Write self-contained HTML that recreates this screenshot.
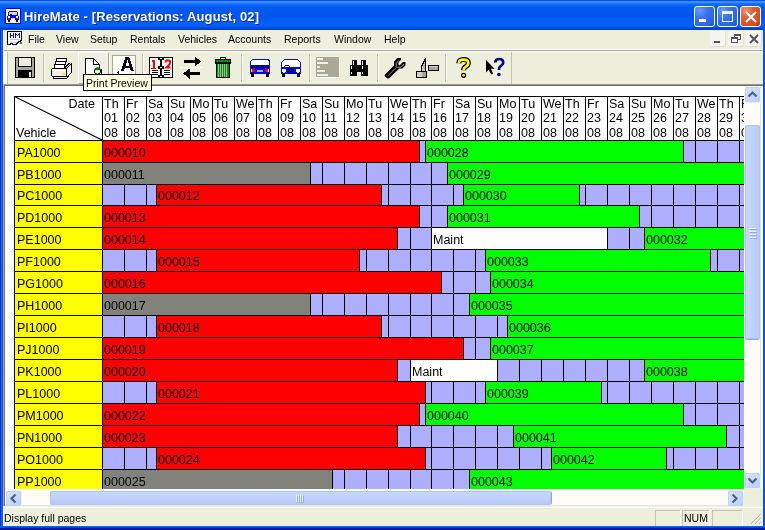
<!DOCTYPE html>
<html><head><meta charset="utf-8">
<style>
*{margin:0;padding:0;box-sizing:border-box}
html,body{width:765px;height:530px;overflow:hidden;background:#0055e5;font-family:"Liberation Sans", sans-serif}
.abs{position:absolute}
#client{position:absolute;left:4px;top:85px;width:759px;height:421px;background:#fff;overflow:hidden;border-left:1px solid #716f64;border-top:1px solid #716f64}
#gridwrap{position:absolute;left:0;top:0;width:744px;height:489px;overflow:hidden}
.t{position:absolute;font-size:12.5px;line-height:14px;color:#000;white-space:nowrap}
.hc{position:absolute;top:97px;height:43px;background:#fff}
.yc{position:absolute;left:15px;width:87px;height:21px;background:#ffff00}
.lc{position:absolute;height:21px;background:#aeaeff}
.bar{position:absolute;height:21px;overflow:hidden;border-left:1px solid #000;border-right:1px solid #000}
.bar span{position:absolute;left:1px;top:5px;font-size:12.5px;line-height:14px;white-space:nowrap;color:#000}
.menu{position:absolute;top:33px;font-size:10.5px;line-height:13px;color:#000;white-space:nowrap}
</style></head><body>
<div id="root" style="position:absolute;left:0;top:0;width:765px;height:530px;will-change:transform">
<div class="abs" style="left:0;top:0;width:765px;height:530px;background:#0855dd"></div>
<div class="abs" style="left:0;top:0;width:1px;height:530px;background:#0030c8"></div>
<div class="abs" style="left:1px;top:30px;width:1px;height:500px;background:#1a6cff"></div>
<div class="abs" style="left:2px;top:30px;width:1px;height:500px;background:#0850e8"></div>
<div class="abs" style="left:0;top:526px;width:765px;height:4px;background:linear-gradient(#1060ff 0,#1060ff 1px,#0048e0 1px,#0048e0 2px,#0020b0 2px,#0020b0 3px,#001090 3px)"></div>
<div class="abs" style="left:0;top:0;width:765px;height:30px;background:linear-gradient(#0a50e8 0px,#0a50e8 1px,#3a8cff 1px,#3a8cff 3px,#2078ff 3px,#0a68fa 5px,#005af0 7px,#0056ee 16px,#005cf4 21px,#0062fa 25px,#0058ee 27px,#0048dc 28px,#003cc8 30px)"></div>
<svg class="abs" style="left:0;top:0" width="24" height="26" shape-rendering="crispEdges"><rect x="5" y="8" width="16" height="16" fill="#0000e8"/><rect x="6" y="9" width="14" height="14" fill="#fff"/><rect x="9" y="11" width="8" height="1" fill="#0000f0"/><rect x="8" y="12" width="1" height="4" fill="#0000f0"/><rect x="17" y="12" width="1" height="4" fill="#0000f0"/><rect x="9" y="12" width="8" height="3" fill="#d8d8c8"/><rect x="10" y="14" width="2" height="1" fill="#000"/><rect x="9" y="15" width="8" height="1" fill="#0000f0"/><rect x="7" y="16" width="12" height="4" fill="#0000f0"/><rect x="8" y="16" width="2" height="2" fill="#fff"/><rect x="16" y="16" width="2" height="2" fill="#fff"/><rect x="8" y="18" width="1" height="1" fill="#f00"/><rect x="17" y="18" width="1" height="1" fill="#f00"/><rect x="11" y="18" width="4" height="2" fill="#e8e8c8"/><rect x="8" y="20" width="2" height="2" fill="#000"/><rect x="16" y="20" width="2" height="2" fill="#000"/></svg>
<div class="abs" style="left:24px;top:8px;font-size:13px;font-weight:bold;color:#fff;line-height:18px;white-space:nowrap;letter-spacing:0.12px;text-shadow:1px 1px 0 #0a2c9a">HireMate - [Reservations: August, 02]</div>
<div style="position:absolute;top:6px;width:21px;height:21px;border:1px solid #fff;border-radius:3px;left:694px;background:radial-gradient(circle at 25% 20%,#6a9cff 0,#3a75f0 35%,#2a60e0 80%,#2050c8 100%)"><div class="abs" style="left:4px;top:12px;width:7px;height:3px;background:#fff"></div></div>
<div style="position:absolute;top:6px;width:21px;height:21px;border:1px solid #fff;border-radius:3px;left:717px;background:radial-gradient(circle at 25% 20%,#6a9cff 0,#3a75f0 35%,#2a60e0 80%,#2050c8 100%)"><div class="abs" style="left:4px;top:4px;width:11px;height:11px;border:1px solid #fff;border-top-width:3px"></div></div>
<div style="position:absolute;top:6px;width:21px;height:21px;border:1px solid #fff;border-radius:3px;left:740px;background:radial-gradient(circle at 25% 20%,#f0906a 0,#e06038 35%,#d04a20 80%,#b83810 100%)"><svg class="abs" style="left:4px;top:4px" width="12" height="12"><path d="M1 1 L11 11 M11 1 L1 11" stroke="#fff" stroke-width="2"/></svg></div>
<div class="abs" style="left:3px;top:30px;width:760px;height:55px;background:#edeedc"></div>
<div class="abs" style="left:3px;top:30px;width:1px;height:55px;background:#f8f4e8"></div>
<div class="abs" style="left:3px;top:84px;width:1px;height:422px;background:#aca899"></div>
<div class="abs" style="left:3px;top:506px;width:1px;height:20px;background:#fffbf0"></div>
<div class="abs" style="left:4px;top:49px;width:759px;height:1px;background:#fff"></div>
<div class="abs" style="left:4px;top:50px;width:759px;height:1px;background:#aca899"></div>
<div class="abs" style="left:4px;top:51px;width:759px;height:1px;background:#fff"></div>
<svg class="abs" style="left:0;top:0" width="30" height="50" shape-rendering="crispEdges"><rect x="7" y="31" width="16" height="17" fill="#fff"/><path d="M7.5 31.5 H21.5 V40.5 H20.5 V41.5 H18.5 V42.5 H17.5 V43.5 H16.5 V44.5 H12.5 V43.5 H10.5 V44.5 H7.5 Z" fill="#fff" stroke="#000"/><rect x="10" y="33" width="1" height="5" fill="#0000ff"/><rect x="13" y="33" width="1" height="5" fill="#0000ff"/><rect x="11" y="35" width="2" height="1" fill="#0000ff"/><rect x="15" y="33" width="1" height="5" fill="#0000ff"/><rect x="19" y="33" width="1" height="5" fill="#0000ff"/><rect x="16" y="34" width="1" height="1" fill="#0000ff"/><rect x="17" y="35" width="1" height="1" fill="#0000ff"/><rect x="18" y="34" width="1" height="1" fill="#0000ff"/><rect x="10" y="39" width="10" height="1" fill="#c8c8dc"/><rect x="10" y="42" width="7" height="1" fill="#c8c8dc"/><rect x="20" y="42" width="2" height="2" fill="#00a000"/></svg>
<div class="menu" style="left:28px">File</div>
<div class="menu" style="left:56px">View</div>
<div class="menu" style="left:90px">Setup</div>
<div class="menu" style="left:130px">Rentals</div>
<div class="menu" style="left:178px">Vehicles</div>
<div class="menu" style="left:228px">Accounts</div>
<div class="menu" style="left:284px">Reports</div>
<div class="menu" style="left:334px">Window</div>
<div class="menu" style="left:384px">Help</div>
<div style="position:absolute;top:31px;width:16px;height:16px;background:#f6f4ee;border-radius:2px;box-shadow:inset -1px -1px 0 #e2dfd4;left:710px"><div class="abs" style="left:4px;top:10px;width:6px;height:2px;background:#555"></div></div>
<div style="position:absolute;top:31px;width:16px;height:16px;background:#f6f4ee;border-radius:2px;box-shadow:inset -1px -1px 0 #e2dfd4;left:728px"><div class="abs" style="left:6px;top:3px;width:7px;height:6px;border:1px solid #555;border-top-width:2px"></div><div class="abs" style="left:3px;top:6px;width:7px;height:6px;border:1px solid #555;border-top-width:2px;background:#f6f4ee"></div></div>
<div style="position:absolute;top:31px;width:16px;height:16px;background:#f6f4ee;border-radius:2px;box-shadow:inset -1px -1px 0 #e2dfd4;left:746px"><svg class="abs" style="left:3px;top:3px" width="10" height="10"><path d="M1 1 L9 9 M9 1 L1 9" stroke="#555" stroke-width="2"/></svg></div>
<div class="abs" style="left:4px;top:84px;width:759px;height:1px;background:#9d9a8c"></div>
<div class="abs" style="left:4px;top:52px;width:3px;height:32px;background:#fff"></div>
<div class="abs" style="left:7px;top:52px;width:1px;height:32px;background:#c5c2b2"></div>
<!-- client -->
<div id="client"></div>
<div id="gridwrap">
<div style="position:absolute;left:14px;top:96px;width:731px;height:393px;background:#000"></div>
<div style="position:absolute;left:15px;top:97px;width:87px;height:43px;background:#fff"></div>
<svg style="position:absolute;left:14px;top:96px" width="89" height="45"><line x1="0.5" y1="0.5" x2="88" y2="44" stroke="#000" stroke-width="1.1"/></svg>
<div class="t" style="left:15px;top:97px;width:80px;text-align:right">Date</div>
<div class="t" style="left:16px;top:126px">Vehicle</div>
<div class="hc" style="left:103px;width:21px"></div>
<div class="t" style="left:104px;top:97px">Th</div>
<div class="t" style="left:104px;top:111px">01</div>
<div class="t" style="left:104px;top:126px">08</div>
<div class="hc" style="left:125px;width:21px"></div>
<div class="t" style="left:126px;top:97px">Fr</div>
<div class="t" style="left:126px;top:111px">02</div>
<div class="t" style="left:126px;top:126px">08</div>
<div class="hc" style="left:147px;width:21px"></div>
<div class="t" style="left:148px;top:97px">Sa</div>
<div class="t" style="left:148px;top:111px">03</div>
<div class="t" style="left:148px;top:126px">08</div>
<div class="hc" style="left:169px;width:21px"></div>
<div class="t" style="left:170px;top:97px">Su</div>
<div class="t" style="left:170px;top:111px">04</div>
<div class="t" style="left:170px;top:126px">08</div>
<div class="hc" style="left:191px;width:21px"></div>
<div class="t" style="left:192px;top:97px">Mo</div>
<div class="t" style="left:192px;top:111px">05</div>
<div class="t" style="left:192px;top:126px">08</div>
<div class="hc" style="left:213px;width:21px"></div>
<div class="t" style="left:214px;top:97px">Tu</div>
<div class="t" style="left:214px;top:111px">06</div>
<div class="t" style="left:214px;top:126px">08</div>
<div class="hc" style="left:235px;width:21px"></div>
<div class="t" style="left:236px;top:97px">We</div>
<div class="t" style="left:236px;top:111px">07</div>
<div class="t" style="left:236px;top:126px">08</div>
<div class="hc" style="left:257px;width:21px"></div>
<div class="t" style="left:258px;top:97px">Th</div>
<div class="t" style="left:258px;top:111px">08</div>
<div class="t" style="left:258px;top:126px">08</div>
<div class="hc" style="left:279px;width:21px"></div>
<div class="t" style="left:280px;top:97px">Fr</div>
<div class="t" style="left:280px;top:111px">09</div>
<div class="t" style="left:280px;top:126px">08</div>
<div class="hc" style="left:301px;width:21px"></div>
<div class="t" style="left:302px;top:97px">Sa</div>
<div class="t" style="left:302px;top:111px">10</div>
<div class="t" style="left:302px;top:126px">08</div>
<div class="hc" style="left:323px;width:21px"></div>
<div class="t" style="left:324px;top:97px">Su</div>
<div class="t" style="left:324px;top:111px">11</div>
<div class="t" style="left:324px;top:126px">08</div>
<div class="hc" style="left:345px;width:21px"></div>
<div class="t" style="left:346px;top:97px">Mo</div>
<div class="t" style="left:346px;top:111px">12</div>
<div class="t" style="left:346px;top:126px">08</div>
<div class="hc" style="left:367px;width:21px"></div>
<div class="t" style="left:368px;top:97px">Tu</div>
<div class="t" style="left:368px;top:111px">13</div>
<div class="t" style="left:368px;top:126px">08</div>
<div class="hc" style="left:389px;width:21px"></div>
<div class="t" style="left:390px;top:97px">We</div>
<div class="t" style="left:390px;top:111px">14</div>
<div class="t" style="left:390px;top:126px">08</div>
<div class="hc" style="left:411px;width:20px"></div>
<div class="t" style="left:412px;top:97px">Th</div>
<div class="t" style="left:412px;top:111px">15</div>
<div class="t" style="left:412px;top:126px">08</div>
<div class="hc" style="left:432px;width:21px"></div>
<div class="t" style="left:433px;top:97px">Fr</div>
<div class="t" style="left:433px;top:111px">16</div>
<div class="t" style="left:433px;top:126px">08</div>
<div class="hc" style="left:454px;width:21px"></div>
<div class="t" style="left:455px;top:97px">Sa</div>
<div class="t" style="left:455px;top:111px">17</div>
<div class="t" style="left:455px;top:126px">08</div>
<div class="hc" style="left:476px;width:21px"></div>
<div class="t" style="left:477px;top:97px">Su</div>
<div class="t" style="left:477px;top:111px">18</div>
<div class="t" style="left:477px;top:126px">08</div>
<div class="hc" style="left:498px;width:21px"></div>
<div class="t" style="left:499px;top:97px">Mo</div>
<div class="t" style="left:499px;top:111px">19</div>
<div class="t" style="left:499px;top:126px">08</div>
<div class="hc" style="left:520px;width:21px"></div>
<div class="t" style="left:521px;top:97px">Tu</div>
<div class="t" style="left:521px;top:111px">20</div>
<div class="t" style="left:521px;top:126px">08</div>
<div class="hc" style="left:542px;width:21px"></div>
<div class="t" style="left:543px;top:97px">We</div>
<div class="t" style="left:543px;top:111px">21</div>
<div class="t" style="left:543px;top:126px">08</div>
<div class="hc" style="left:564px;width:21px"></div>
<div class="t" style="left:565px;top:97px">Th</div>
<div class="t" style="left:565px;top:111px">22</div>
<div class="t" style="left:565px;top:126px">08</div>
<div class="hc" style="left:586px;width:21px"></div>
<div class="t" style="left:587px;top:97px">Fr</div>
<div class="t" style="left:587px;top:111px">23</div>
<div class="t" style="left:587px;top:126px">08</div>
<div class="hc" style="left:608px;width:21px"></div>
<div class="t" style="left:609px;top:97px">Sa</div>
<div class="t" style="left:609px;top:111px">24</div>
<div class="t" style="left:609px;top:126px">08</div>
<div class="hc" style="left:630px;width:21px"></div>
<div class="t" style="left:631px;top:97px">Su</div>
<div class="t" style="left:631px;top:111px">25</div>
<div class="t" style="left:631px;top:126px">08</div>
<div class="hc" style="left:652px;width:21px"></div>
<div class="t" style="left:653px;top:97px">Mo</div>
<div class="t" style="left:653px;top:111px">26</div>
<div class="t" style="left:653px;top:126px">08</div>
<div class="hc" style="left:674px;width:21px"></div>
<div class="t" style="left:675px;top:97px">Tu</div>
<div class="t" style="left:675px;top:111px">27</div>
<div class="t" style="left:675px;top:126px">08</div>
<div class="hc" style="left:696px;width:21px"></div>
<div class="t" style="left:697px;top:97px">We</div>
<div class="t" style="left:697px;top:111px">28</div>
<div class="t" style="left:697px;top:126px">08</div>
<div class="hc" style="left:718px;width:21px"></div>
<div class="t" style="left:719px;top:97px">Th</div>
<div class="t" style="left:719px;top:111px">29</div>
<div class="t" style="left:719px;top:126px">08</div>
<div class="hc" style="left:740px;width:21px"></div>
<div class="t" style="left:741px;top:97px">Fr</div>
<div class="t" style="left:741px;top:111px">30</div>
<div class="t" style="left:741px;top:126px">08</div>
<div class="yc" style="top:141px;height:21px"></div>
<div class="t" style="left:17px;top:146px">PA1000</div>
<div class="lc" style="left:103px;top:141px;width:21px;height:21px"></div>
<div class="lc" style="left:125px;top:141px;width:21px;height:21px"></div>
<div class="lc" style="left:147px;top:141px;width:21px;height:21px"></div>
<div class="lc" style="left:169px;top:141px;width:21px;height:21px"></div>
<div class="lc" style="left:191px;top:141px;width:21px;height:21px"></div>
<div class="lc" style="left:213px;top:141px;width:21px;height:21px"></div>
<div class="lc" style="left:235px;top:141px;width:21px;height:21px"></div>
<div class="lc" style="left:257px;top:141px;width:21px;height:21px"></div>
<div class="lc" style="left:279px;top:141px;width:21px;height:21px"></div>
<div class="lc" style="left:301px;top:141px;width:21px;height:21px"></div>
<div class="lc" style="left:323px;top:141px;width:21px;height:21px"></div>
<div class="lc" style="left:345px;top:141px;width:21px;height:21px"></div>
<div class="lc" style="left:367px;top:141px;width:21px;height:21px"></div>
<div class="lc" style="left:389px;top:141px;width:21px;height:21px"></div>
<div class="lc" style="left:411px;top:141px;width:20px;height:21px"></div>
<div class="lc" style="left:432px;top:141px;width:21px;height:21px"></div>
<div class="lc" style="left:454px;top:141px;width:21px;height:21px"></div>
<div class="lc" style="left:476px;top:141px;width:21px;height:21px"></div>
<div class="lc" style="left:498px;top:141px;width:21px;height:21px"></div>
<div class="lc" style="left:520px;top:141px;width:21px;height:21px"></div>
<div class="lc" style="left:542px;top:141px;width:21px;height:21px"></div>
<div class="lc" style="left:564px;top:141px;width:21px;height:21px"></div>
<div class="lc" style="left:586px;top:141px;width:21px;height:21px"></div>
<div class="lc" style="left:608px;top:141px;width:21px;height:21px"></div>
<div class="lc" style="left:630px;top:141px;width:21px;height:21px"></div>
<div class="lc" style="left:652px;top:141px;width:21px;height:21px"></div>
<div class="lc" style="left:674px;top:141px;width:21px;height:21px"></div>
<div class="lc" style="left:696px;top:141px;width:21px;height:21px"></div>
<div class="lc" style="left:718px;top:141px;width:21px;height:21px"></div>
<div class="lc" style="left:740px;top:141px;width:21px;height:21px"></div>
<div class="bar" style="left:102px;top:141px;width:318px;height:21px;background:#ff0000"><span style="top:5px">000010</span></div>
<div class="bar" style="left:425px;top:141px;width:259px;height:21px;background:#00ff00"><span style="top:5px">000028</span></div>
<div class="yc" style="top:163px;height:21px"></div>
<div class="t" style="left:17px;top:168px">PB1000</div>
<div class="lc" style="left:103px;top:163px;width:21px;height:21px"></div>
<div class="lc" style="left:125px;top:163px;width:21px;height:21px"></div>
<div class="lc" style="left:147px;top:163px;width:21px;height:21px"></div>
<div class="lc" style="left:169px;top:163px;width:21px;height:21px"></div>
<div class="lc" style="left:191px;top:163px;width:21px;height:21px"></div>
<div class="lc" style="left:213px;top:163px;width:21px;height:21px"></div>
<div class="lc" style="left:235px;top:163px;width:21px;height:21px"></div>
<div class="lc" style="left:257px;top:163px;width:21px;height:21px"></div>
<div class="lc" style="left:279px;top:163px;width:21px;height:21px"></div>
<div class="lc" style="left:301px;top:163px;width:21px;height:21px"></div>
<div class="lc" style="left:323px;top:163px;width:21px;height:21px"></div>
<div class="lc" style="left:345px;top:163px;width:21px;height:21px"></div>
<div class="lc" style="left:367px;top:163px;width:21px;height:21px"></div>
<div class="lc" style="left:389px;top:163px;width:21px;height:21px"></div>
<div class="lc" style="left:411px;top:163px;width:20px;height:21px"></div>
<div class="lc" style="left:432px;top:163px;width:21px;height:21px"></div>
<div class="lc" style="left:454px;top:163px;width:21px;height:21px"></div>
<div class="lc" style="left:476px;top:163px;width:21px;height:21px"></div>
<div class="lc" style="left:498px;top:163px;width:21px;height:21px"></div>
<div class="lc" style="left:520px;top:163px;width:21px;height:21px"></div>
<div class="lc" style="left:542px;top:163px;width:21px;height:21px"></div>
<div class="lc" style="left:564px;top:163px;width:21px;height:21px"></div>
<div class="lc" style="left:586px;top:163px;width:21px;height:21px"></div>
<div class="lc" style="left:608px;top:163px;width:21px;height:21px"></div>
<div class="lc" style="left:630px;top:163px;width:21px;height:21px"></div>
<div class="lc" style="left:652px;top:163px;width:21px;height:21px"></div>
<div class="lc" style="left:674px;top:163px;width:21px;height:21px"></div>
<div class="lc" style="left:696px;top:163px;width:21px;height:21px"></div>
<div class="lc" style="left:718px;top:163px;width:21px;height:21px"></div>
<div class="lc" style="left:740px;top:163px;width:21px;height:21px"></div>
<div class="bar" style="left:102px;top:163px;width:209px;height:21px;background:#82827c"><span style="top:5px">000011</span></div>
<div class="bar" style="left:447px;top:163px;width:299px;height:21px;background:#00ff00"><span style="top:5px">000029</span></div>
<div class="yc" style="top:185px;height:20px"></div>
<div class="t" style="left:17px;top:189px">PC1000</div>
<div class="lc" style="left:103px;top:185px;width:21px;height:20px"></div>
<div class="lc" style="left:125px;top:185px;width:21px;height:20px"></div>
<div class="lc" style="left:147px;top:185px;width:21px;height:20px"></div>
<div class="lc" style="left:169px;top:185px;width:21px;height:20px"></div>
<div class="lc" style="left:191px;top:185px;width:21px;height:20px"></div>
<div class="lc" style="left:213px;top:185px;width:21px;height:20px"></div>
<div class="lc" style="left:235px;top:185px;width:21px;height:20px"></div>
<div class="lc" style="left:257px;top:185px;width:21px;height:20px"></div>
<div class="lc" style="left:279px;top:185px;width:21px;height:20px"></div>
<div class="lc" style="left:301px;top:185px;width:21px;height:20px"></div>
<div class="lc" style="left:323px;top:185px;width:21px;height:20px"></div>
<div class="lc" style="left:345px;top:185px;width:21px;height:20px"></div>
<div class="lc" style="left:367px;top:185px;width:21px;height:20px"></div>
<div class="lc" style="left:389px;top:185px;width:21px;height:20px"></div>
<div class="lc" style="left:411px;top:185px;width:20px;height:20px"></div>
<div class="lc" style="left:432px;top:185px;width:21px;height:20px"></div>
<div class="lc" style="left:454px;top:185px;width:21px;height:20px"></div>
<div class="lc" style="left:476px;top:185px;width:21px;height:20px"></div>
<div class="lc" style="left:498px;top:185px;width:21px;height:20px"></div>
<div class="lc" style="left:520px;top:185px;width:21px;height:20px"></div>
<div class="lc" style="left:542px;top:185px;width:21px;height:20px"></div>
<div class="lc" style="left:564px;top:185px;width:21px;height:20px"></div>
<div class="lc" style="left:586px;top:185px;width:21px;height:20px"></div>
<div class="lc" style="left:608px;top:185px;width:21px;height:20px"></div>
<div class="lc" style="left:630px;top:185px;width:21px;height:20px"></div>
<div class="lc" style="left:652px;top:185px;width:21px;height:20px"></div>
<div class="lc" style="left:674px;top:185px;width:21px;height:20px"></div>
<div class="lc" style="left:696px;top:185px;width:21px;height:20px"></div>
<div class="lc" style="left:718px;top:185px;width:21px;height:20px"></div>
<div class="lc" style="left:740px;top:185px;width:21px;height:20px"></div>
<div class="bar" style="left:156px;top:185px;width:226px;height:20px;background:#ff0000"><span style="top:4px">000012</span></div>
<div class="bar" style="left:463px;top:185px;width:117px;height:20px;background:#00ff00"><span style="top:4px">000030</span></div>
<div class="yc" style="top:206px;height:21px"></div>
<div class="t" style="left:17px;top:211px">PD1000</div>
<div class="lc" style="left:103px;top:206px;width:21px;height:21px"></div>
<div class="lc" style="left:125px;top:206px;width:21px;height:21px"></div>
<div class="lc" style="left:147px;top:206px;width:21px;height:21px"></div>
<div class="lc" style="left:169px;top:206px;width:21px;height:21px"></div>
<div class="lc" style="left:191px;top:206px;width:21px;height:21px"></div>
<div class="lc" style="left:213px;top:206px;width:21px;height:21px"></div>
<div class="lc" style="left:235px;top:206px;width:21px;height:21px"></div>
<div class="lc" style="left:257px;top:206px;width:21px;height:21px"></div>
<div class="lc" style="left:279px;top:206px;width:21px;height:21px"></div>
<div class="lc" style="left:301px;top:206px;width:21px;height:21px"></div>
<div class="lc" style="left:323px;top:206px;width:21px;height:21px"></div>
<div class="lc" style="left:345px;top:206px;width:21px;height:21px"></div>
<div class="lc" style="left:367px;top:206px;width:21px;height:21px"></div>
<div class="lc" style="left:389px;top:206px;width:21px;height:21px"></div>
<div class="lc" style="left:411px;top:206px;width:20px;height:21px"></div>
<div class="lc" style="left:432px;top:206px;width:21px;height:21px"></div>
<div class="lc" style="left:454px;top:206px;width:21px;height:21px"></div>
<div class="lc" style="left:476px;top:206px;width:21px;height:21px"></div>
<div class="lc" style="left:498px;top:206px;width:21px;height:21px"></div>
<div class="lc" style="left:520px;top:206px;width:21px;height:21px"></div>
<div class="lc" style="left:542px;top:206px;width:21px;height:21px"></div>
<div class="lc" style="left:564px;top:206px;width:21px;height:21px"></div>
<div class="lc" style="left:586px;top:206px;width:21px;height:21px"></div>
<div class="lc" style="left:608px;top:206px;width:21px;height:21px"></div>
<div class="lc" style="left:630px;top:206px;width:21px;height:21px"></div>
<div class="lc" style="left:652px;top:206px;width:21px;height:21px"></div>
<div class="lc" style="left:674px;top:206px;width:21px;height:21px"></div>
<div class="lc" style="left:696px;top:206px;width:21px;height:21px"></div>
<div class="lc" style="left:718px;top:206px;width:21px;height:21px"></div>
<div class="lc" style="left:740px;top:206px;width:21px;height:21px"></div>
<div class="bar" style="left:102px;top:206px;width:318px;height:21px;background:#ff0000"><span style="top:5px">000013</span></div>
<div class="bar" style="left:447px;top:206px;width:193px;height:21px;background:#00ff00"><span style="top:5px">000031</span></div>
<div class="yc" style="top:228px;height:21px"></div>
<div class="t" style="left:17px;top:233px">PE1000</div>
<div class="lc" style="left:103px;top:228px;width:21px;height:21px"></div>
<div class="lc" style="left:125px;top:228px;width:21px;height:21px"></div>
<div class="lc" style="left:147px;top:228px;width:21px;height:21px"></div>
<div class="lc" style="left:169px;top:228px;width:21px;height:21px"></div>
<div class="lc" style="left:191px;top:228px;width:21px;height:21px"></div>
<div class="lc" style="left:213px;top:228px;width:21px;height:21px"></div>
<div class="lc" style="left:235px;top:228px;width:21px;height:21px"></div>
<div class="lc" style="left:257px;top:228px;width:21px;height:21px"></div>
<div class="lc" style="left:279px;top:228px;width:21px;height:21px"></div>
<div class="lc" style="left:301px;top:228px;width:21px;height:21px"></div>
<div class="lc" style="left:323px;top:228px;width:21px;height:21px"></div>
<div class="lc" style="left:345px;top:228px;width:21px;height:21px"></div>
<div class="lc" style="left:367px;top:228px;width:21px;height:21px"></div>
<div class="lc" style="left:389px;top:228px;width:21px;height:21px"></div>
<div class="lc" style="left:411px;top:228px;width:20px;height:21px"></div>
<div class="lc" style="left:432px;top:228px;width:21px;height:21px"></div>
<div class="lc" style="left:454px;top:228px;width:21px;height:21px"></div>
<div class="lc" style="left:476px;top:228px;width:21px;height:21px"></div>
<div class="lc" style="left:498px;top:228px;width:21px;height:21px"></div>
<div class="lc" style="left:520px;top:228px;width:21px;height:21px"></div>
<div class="lc" style="left:542px;top:228px;width:21px;height:21px"></div>
<div class="lc" style="left:564px;top:228px;width:21px;height:21px"></div>
<div class="lc" style="left:586px;top:228px;width:21px;height:21px"></div>
<div class="lc" style="left:608px;top:228px;width:21px;height:21px"></div>
<div class="lc" style="left:630px;top:228px;width:21px;height:21px"></div>
<div class="lc" style="left:652px;top:228px;width:21px;height:21px"></div>
<div class="lc" style="left:674px;top:228px;width:21px;height:21px"></div>
<div class="lc" style="left:696px;top:228px;width:21px;height:21px"></div>
<div class="lc" style="left:718px;top:228px;width:21px;height:21px"></div>
<div class="lc" style="left:740px;top:228px;width:21px;height:21px"></div>
<div class="bar" style="left:102px;top:228px;width:296px;height:21px;background:#ff0000"><span style="top:5px">000014</span></div>
<div class="bar" style="left:431px;top:228px;width:177px;height:21px;background:#ffffff"><span style="top:5px">Maint</span></div>
<div class="bar" style="left:644px;top:228px;width:102px;height:21px;background:#00ff00"><span style="top:5px">000032</span></div>
<div class="yc" style="top:250px;height:21px"></div>
<div class="t" style="left:17px;top:255px">PF1000</div>
<div class="lc" style="left:103px;top:250px;width:21px;height:21px"></div>
<div class="lc" style="left:125px;top:250px;width:21px;height:21px"></div>
<div class="lc" style="left:147px;top:250px;width:21px;height:21px"></div>
<div class="lc" style="left:169px;top:250px;width:21px;height:21px"></div>
<div class="lc" style="left:191px;top:250px;width:21px;height:21px"></div>
<div class="lc" style="left:213px;top:250px;width:21px;height:21px"></div>
<div class="lc" style="left:235px;top:250px;width:21px;height:21px"></div>
<div class="lc" style="left:257px;top:250px;width:21px;height:21px"></div>
<div class="lc" style="left:279px;top:250px;width:21px;height:21px"></div>
<div class="lc" style="left:301px;top:250px;width:21px;height:21px"></div>
<div class="lc" style="left:323px;top:250px;width:21px;height:21px"></div>
<div class="lc" style="left:345px;top:250px;width:21px;height:21px"></div>
<div class="lc" style="left:367px;top:250px;width:21px;height:21px"></div>
<div class="lc" style="left:389px;top:250px;width:21px;height:21px"></div>
<div class="lc" style="left:411px;top:250px;width:20px;height:21px"></div>
<div class="lc" style="left:432px;top:250px;width:21px;height:21px"></div>
<div class="lc" style="left:454px;top:250px;width:21px;height:21px"></div>
<div class="lc" style="left:476px;top:250px;width:21px;height:21px"></div>
<div class="lc" style="left:498px;top:250px;width:21px;height:21px"></div>
<div class="lc" style="left:520px;top:250px;width:21px;height:21px"></div>
<div class="lc" style="left:542px;top:250px;width:21px;height:21px"></div>
<div class="lc" style="left:564px;top:250px;width:21px;height:21px"></div>
<div class="lc" style="left:586px;top:250px;width:21px;height:21px"></div>
<div class="lc" style="left:608px;top:250px;width:21px;height:21px"></div>
<div class="lc" style="left:630px;top:250px;width:21px;height:21px"></div>
<div class="lc" style="left:652px;top:250px;width:21px;height:21px"></div>
<div class="lc" style="left:674px;top:250px;width:21px;height:21px"></div>
<div class="lc" style="left:696px;top:250px;width:21px;height:21px"></div>
<div class="lc" style="left:718px;top:250px;width:21px;height:21px"></div>
<div class="lc" style="left:740px;top:250px;width:21px;height:21px"></div>
<div class="bar" style="left:156px;top:250px;width:204px;height:21px;background:#ff0000"><span style="top:5px">000015</span></div>
<div class="bar" style="left:485px;top:250px;width:226px;height:21px;background:#00ff00"><span style="top:5px">000033</span></div>
<div class="yc" style="top:272px;height:21px"></div>
<div class="t" style="left:17px;top:277px">PG1000</div>
<div class="lc" style="left:103px;top:272px;width:21px;height:21px"></div>
<div class="lc" style="left:125px;top:272px;width:21px;height:21px"></div>
<div class="lc" style="left:147px;top:272px;width:21px;height:21px"></div>
<div class="lc" style="left:169px;top:272px;width:21px;height:21px"></div>
<div class="lc" style="left:191px;top:272px;width:21px;height:21px"></div>
<div class="lc" style="left:213px;top:272px;width:21px;height:21px"></div>
<div class="lc" style="left:235px;top:272px;width:21px;height:21px"></div>
<div class="lc" style="left:257px;top:272px;width:21px;height:21px"></div>
<div class="lc" style="left:279px;top:272px;width:21px;height:21px"></div>
<div class="lc" style="left:301px;top:272px;width:21px;height:21px"></div>
<div class="lc" style="left:323px;top:272px;width:21px;height:21px"></div>
<div class="lc" style="left:345px;top:272px;width:21px;height:21px"></div>
<div class="lc" style="left:367px;top:272px;width:21px;height:21px"></div>
<div class="lc" style="left:389px;top:272px;width:21px;height:21px"></div>
<div class="lc" style="left:411px;top:272px;width:20px;height:21px"></div>
<div class="lc" style="left:432px;top:272px;width:21px;height:21px"></div>
<div class="lc" style="left:454px;top:272px;width:21px;height:21px"></div>
<div class="lc" style="left:476px;top:272px;width:21px;height:21px"></div>
<div class="lc" style="left:498px;top:272px;width:21px;height:21px"></div>
<div class="lc" style="left:520px;top:272px;width:21px;height:21px"></div>
<div class="lc" style="left:542px;top:272px;width:21px;height:21px"></div>
<div class="lc" style="left:564px;top:272px;width:21px;height:21px"></div>
<div class="lc" style="left:586px;top:272px;width:21px;height:21px"></div>
<div class="lc" style="left:608px;top:272px;width:21px;height:21px"></div>
<div class="lc" style="left:630px;top:272px;width:21px;height:21px"></div>
<div class="lc" style="left:652px;top:272px;width:21px;height:21px"></div>
<div class="lc" style="left:674px;top:272px;width:21px;height:21px"></div>
<div class="lc" style="left:696px;top:272px;width:21px;height:21px"></div>
<div class="lc" style="left:718px;top:272px;width:21px;height:21px"></div>
<div class="lc" style="left:740px;top:272px;width:21px;height:21px"></div>
<div class="bar" style="left:102px;top:272px;width:340px;height:21px;background:#ff0000"><span style="top:5px">000016</span></div>
<div class="bar" style="left:490px;top:272px;width:256px;height:21px;background:#00ff00"><span style="top:5px">000034</span></div>
<div class="yc" style="top:294px;height:21px"></div>
<div class="t" style="left:17px;top:299px">PH1000</div>
<div class="lc" style="left:103px;top:294px;width:21px;height:21px"></div>
<div class="lc" style="left:125px;top:294px;width:21px;height:21px"></div>
<div class="lc" style="left:147px;top:294px;width:21px;height:21px"></div>
<div class="lc" style="left:169px;top:294px;width:21px;height:21px"></div>
<div class="lc" style="left:191px;top:294px;width:21px;height:21px"></div>
<div class="lc" style="left:213px;top:294px;width:21px;height:21px"></div>
<div class="lc" style="left:235px;top:294px;width:21px;height:21px"></div>
<div class="lc" style="left:257px;top:294px;width:21px;height:21px"></div>
<div class="lc" style="left:279px;top:294px;width:21px;height:21px"></div>
<div class="lc" style="left:301px;top:294px;width:21px;height:21px"></div>
<div class="lc" style="left:323px;top:294px;width:21px;height:21px"></div>
<div class="lc" style="left:345px;top:294px;width:21px;height:21px"></div>
<div class="lc" style="left:367px;top:294px;width:21px;height:21px"></div>
<div class="lc" style="left:389px;top:294px;width:21px;height:21px"></div>
<div class="lc" style="left:411px;top:294px;width:20px;height:21px"></div>
<div class="lc" style="left:432px;top:294px;width:21px;height:21px"></div>
<div class="lc" style="left:454px;top:294px;width:21px;height:21px"></div>
<div class="lc" style="left:476px;top:294px;width:21px;height:21px"></div>
<div class="lc" style="left:498px;top:294px;width:21px;height:21px"></div>
<div class="lc" style="left:520px;top:294px;width:21px;height:21px"></div>
<div class="lc" style="left:542px;top:294px;width:21px;height:21px"></div>
<div class="lc" style="left:564px;top:294px;width:21px;height:21px"></div>
<div class="lc" style="left:586px;top:294px;width:21px;height:21px"></div>
<div class="lc" style="left:608px;top:294px;width:21px;height:21px"></div>
<div class="lc" style="left:630px;top:294px;width:21px;height:21px"></div>
<div class="lc" style="left:652px;top:294px;width:21px;height:21px"></div>
<div class="lc" style="left:674px;top:294px;width:21px;height:21px"></div>
<div class="lc" style="left:696px;top:294px;width:21px;height:21px"></div>
<div class="lc" style="left:718px;top:294px;width:21px;height:21px"></div>
<div class="lc" style="left:740px;top:294px;width:21px;height:21px"></div>
<div class="bar" style="left:102px;top:294px;width:209px;height:21px;background:#82827c"><span style="top:5px">000017</span></div>
<div class="bar" style="left:469px;top:294px;width:277px;height:21px;background:#00ff00"><span style="top:5px">000035</span></div>
<div class="yc" style="top:316px;height:21px"></div>
<div class="t" style="left:17px;top:321px">PI1000</div>
<div class="lc" style="left:103px;top:316px;width:21px;height:21px"></div>
<div class="lc" style="left:125px;top:316px;width:21px;height:21px"></div>
<div class="lc" style="left:147px;top:316px;width:21px;height:21px"></div>
<div class="lc" style="left:169px;top:316px;width:21px;height:21px"></div>
<div class="lc" style="left:191px;top:316px;width:21px;height:21px"></div>
<div class="lc" style="left:213px;top:316px;width:21px;height:21px"></div>
<div class="lc" style="left:235px;top:316px;width:21px;height:21px"></div>
<div class="lc" style="left:257px;top:316px;width:21px;height:21px"></div>
<div class="lc" style="left:279px;top:316px;width:21px;height:21px"></div>
<div class="lc" style="left:301px;top:316px;width:21px;height:21px"></div>
<div class="lc" style="left:323px;top:316px;width:21px;height:21px"></div>
<div class="lc" style="left:345px;top:316px;width:21px;height:21px"></div>
<div class="lc" style="left:367px;top:316px;width:21px;height:21px"></div>
<div class="lc" style="left:389px;top:316px;width:21px;height:21px"></div>
<div class="lc" style="left:411px;top:316px;width:20px;height:21px"></div>
<div class="lc" style="left:432px;top:316px;width:21px;height:21px"></div>
<div class="lc" style="left:454px;top:316px;width:21px;height:21px"></div>
<div class="lc" style="left:476px;top:316px;width:21px;height:21px"></div>
<div class="lc" style="left:498px;top:316px;width:21px;height:21px"></div>
<div class="lc" style="left:520px;top:316px;width:21px;height:21px"></div>
<div class="lc" style="left:542px;top:316px;width:21px;height:21px"></div>
<div class="lc" style="left:564px;top:316px;width:21px;height:21px"></div>
<div class="lc" style="left:586px;top:316px;width:21px;height:21px"></div>
<div class="lc" style="left:608px;top:316px;width:21px;height:21px"></div>
<div class="lc" style="left:630px;top:316px;width:21px;height:21px"></div>
<div class="lc" style="left:652px;top:316px;width:21px;height:21px"></div>
<div class="lc" style="left:674px;top:316px;width:21px;height:21px"></div>
<div class="lc" style="left:696px;top:316px;width:21px;height:21px"></div>
<div class="lc" style="left:718px;top:316px;width:21px;height:21px"></div>
<div class="lc" style="left:740px;top:316px;width:21px;height:21px"></div>
<div class="bar" style="left:156px;top:316px;width:226px;height:21px;background:#ff0000"><span style="top:5px">000018</span></div>
<div class="bar" style="left:507px;top:316px;width:239px;height:21px;background:#00ff00"><span style="top:5px">000036</span></div>
<div class="yc" style="top:338px;height:21px"></div>
<div class="t" style="left:17px;top:343px">PJ1000</div>
<div class="lc" style="left:103px;top:338px;width:21px;height:21px"></div>
<div class="lc" style="left:125px;top:338px;width:21px;height:21px"></div>
<div class="lc" style="left:147px;top:338px;width:21px;height:21px"></div>
<div class="lc" style="left:169px;top:338px;width:21px;height:21px"></div>
<div class="lc" style="left:191px;top:338px;width:21px;height:21px"></div>
<div class="lc" style="left:213px;top:338px;width:21px;height:21px"></div>
<div class="lc" style="left:235px;top:338px;width:21px;height:21px"></div>
<div class="lc" style="left:257px;top:338px;width:21px;height:21px"></div>
<div class="lc" style="left:279px;top:338px;width:21px;height:21px"></div>
<div class="lc" style="left:301px;top:338px;width:21px;height:21px"></div>
<div class="lc" style="left:323px;top:338px;width:21px;height:21px"></div>
<div class="lc" style="left:345px;top:338px;width:21px;height:21px"></div>
<div class="lc" style="left:367px;top:338px;width:21px;height:21px"></div>
<div class="lc" style="left:389px;top:338px;width:21px;height:21px"></div>
<div class="lc" style="left:411px;top:338px;width:20px;height:21px"></div>
<div class="lc" style="left:432px;top:338px;width:21px;height:21px"></div>
<div class="lc" style="left:454px;top:338px;width:21px;height:21px"></div>
<div class="lc" style="left:476px;top:338px;width:21px;height:21px"></div>
<div class="lc" style="left:498px;top:338px;width:21px;height:21px"></div>
<div class="lc" style="left:520px;top:338px;width:21px;height:21px"></div>
<div class="lc" style="left:542px;top:338px;width:21px;height:21px"></div>
<div class="lc" style="left:564px;top:338px;width:21px;height:21px"></div>
<div class="lc" style="left:586px;top:338px;width:21px;height:21px"></div>
<div class="lc" style="left:608px;top:338px;width:21px;height:21px"></div>
<div class="lc" style="left:630px;top:338px;width:21px;height:21px"></div>
<div class="lc" style="left:652px;top:338px;width:21px;height:21px"></div>
<div class="lc" style="left:674px;top:338px;width:21px;height:21px"></div>
<div class="lc" style="left:696px;top:338px;width:21px;height:21px"></div>
<div class="lc" style="left:718px;top:338px;width:21px;height:21px"></div>
<div class="lc" style="left:740px;top:338px;width:21px;height:21px"></div>
<div class="bar" style="left:102px;top:338px;width:362px;height:21px;background:#ff0000"><span style="top:5px">000019</span></div>
<div class="bar" style="left:490px;top:338px;width:256px;height:21px;background:#00ff00"><span style="top:5px">000037</span></div>
<div class="yc" style="top:360px;height:21px"></div>
<div class="t" style="left:17px;top:365px">PK1000</div>
<div class="lc" style="left:103px;top:360px;width:21px;height:21px"></div>
<div class="lc" style="left:125px;top:360px;width:21px;height:21px"></div>
<div class="lc" style="left:147px;top:360px;width:21px;height:21px"></div>
<div class="lc" style="left:169px;top:360px;width:21px;height:21px"></div>
<div class="lc" style="left:191px;top:360px;width:21px;height:21px"></div>
<div class="lc" style="left:213px;top:360px;width:21px;height:21px"></div>
<div class="lc" style="left:235px;top:360px;width:21px;height:21px"></div>
<div class="lc" style="left:257px;top:360px;width:21px;height:21px"></div>
<div class="lc" style="left:279px;top:360px;width:21px;height:21px"></div>
<div class="lc" style="left:301px;top:360px;width:21px;height:21px"></div>
<div class="lc" style="left:323px;top:360px;width:21px;height:21px"></div>
<div class="lc" style="left:345px;top:360px;width:21px;height:21px"></div>
<div class="lc" style="left:367px;top:360px;width:21px;height:21px"></div>
<div class="lc" style="left:389px;top:360px;width:21px;height:21px"></div>
<div class="lc" style="left:411px;top:360px;width:20px;height:21px"></div>
<div class="lc" style="left:432px;top:360px;width:21px;height:21px"></div>
<div class="lc" style="left:454px;top:360px;width:21px;height:21px"></div>
<div class="lc" style="left:476px;top:360px;width:21px;height:21px"></div>
<div class="lc" style="left:498px;top:360px;width:21px;height:21px"></div>
<div class="lc" style="left:520px;top:360px;width:21px;height:21px"></div>
<div class="lc" style="left:542px;top:360px;width:21px;height:21px"></div>
<div class="lc" style="left:564px;top:360px;width:21px;height:21px"></div>
<div class="lc" style="left:586px;top:360px;width:21px;height:21px"></div>
<div class="lc" style="left:608px;top:360px;width:21px;height:21px"></div>
<div class="lc" style="left:630px;top:360px;width:21px;height:21px"></div>
<div class="lc" style="left:652px;top:360px;width:21px;height:21px"></div>
<div class="lc" style="left:674px;top:360px;width:21px;height:21px"></div>
<div class="lc" style="left:696px;top:360px;width:21px;height:21px"></div>
<div class="lc" style="left:718px;top:360px;width:21px;height:21px"></div>
<div class="lc" style="left:740px;top:360px;width:21px;height:21px"></div>
<div class="bar" style="left:102px;top:360px;width:296px;height:21px;background:#ff0000"><span style="top:5px">000020</span></div>
<div class="bar" style="left:410px;top:360px;width:88px;height:21px;background:#ffffff"><span style="top:5px">Maint</span></div>
<div class="bar" style="left:644px;top:360px;width:102px;height:21px;background:#00ff00"><span style="top:5px">000038</span></div>
<div class="yc" style="top:382px;height:21px"></div>
<div class="t" style="left:17px;top:387px">PL1000</div>
<div class="lc" style="left:103px;top:382px;width:21px;height:21px"></div>
<div class="lc" style="left:125px;top:382px;width:21px;height:21px"></div>
<div class="lc" style="left:147px;top:382px;width:21px;height:21px"></div>
<div class="lc" style="left:169px;top:382px;width:21px;height:21px"></div>
<div class="lc" style="left:191px;top:382px;width:21px;height:21px"></div>
<div class="lc" style="left:213px;top:382px;width:21px;height:21px"></div>
<div class="lc" style="left:235px;top:382px;width:21px;height:21px"></div>
<div class="lc" style="left:257px;top:382px;width:21px;height:21px"></div>
<div class="lc" style="left:279px;top:382px;width:21px;height:21px"></div>
<div class="lc" style="left:301px;top:382px;width:21px;height:21px"></div>
<div class="lc" style="left:323px;top:382px;width:21px;height:21px"></div>
<div class="lc" style="left:345px;top:382px;width:21px;height:21px"></div>
<div class="lc" style="left:367px;top:382px;width:21px;height:21px"></div>
<div class="lc" style="left:389px;top:382px;width:21px;height:21px"></div>
<div class="lc" style="left:411px;top:382px;width:20px;height:21px"></div>
<div class="lc" style="left:432px;top:382px;width:21px;height:21px"></div>
<div class="lc" style="left:454px;top:382px;width:21px;height:21px"></div>
<div class="lc" style="left:476px;top:382px;width:21px;height:21px"></div>
<div class="lc" style="left:498px;top:382px;width:21px;height:21px"></div>
<div class="lc" style="left:520px;top:382px;width:21px;height:21px"></div>
<div class="lc" style="left:542px;top:382px;width:21px;height:21px"></div>
<div class="lc" style="left:564px;top:382px;width:21px;height:21px"></div>
<div class="lc" style="left:586px;top:382px;width:21px;height:21px"></div>
<div class="lc" style="left:608px;top:382px;width:21px;height:21px"></div>
<div class="lc" style="left:630px;top:382px;width:21px;height:21px"></div>
<div class="lc" style="left:652px;top:382px;width:21px;height:21px"></div>
<div class="lc" style="left:674px;top:382px;width:21px;height:21px"></div>
<div class="lc" style="left:696px;top:382px;width:21px;height:21px"></div>
<div class="lc" style="left:718px;top:382px;width:21px;height:21px"></div>
<div class="lc" style="left:740px;top:382px;width:21px;height:21px"></div>
<div class="bar" style="left:156px;top:382px;width:270px;height:21px;background:#ff0000"><span style="top:5px">000021</span></div>
<div class="bar" style="left:485px;top:382px;width:117px;height:21px;background:#00ff00"><span style="top:5px">000039</span></div>
<div class="yc" style="top:404px;height:21px"></div>
<div class="t" style="left:17px;top:409px">PM1000</div>
<div class="lc" style="left:103px;top:404px;width:21px;height:21px"></div>
<div class="lc" style="left:125px;top:404px;width:21px;height:21px"></div>
<div class="lc" style="left:147px;top:404px;width:21px;height:21px"></div>
<div class="lc" style="left:169px;top:404px;width:21px;height:21px"></div>
<div class="lc" style="left:191px;top:404px;width:21px;height:21px"></div>
<div class="lc" style="left:213px;top:404px;width:21px;height:21px"></div>
<div class="lc" style="left:235px;top:404px;width:21px;height:21px"></div>
<div class="lc" style="left:257px;top:404px;width:21px;height:21px"></div>
<div class="lc" style="left:279px;top:404px;width:21px;height:21px"></div>
<div class="lc" style="left:301px;top:404px;width:21px;height:21px"></div>
<div class="lc" style="left:323px;top:404px;width:21px;height:21px"></div>
<div class="lc" style="left:345px;top:404px;width:21px;height:21px"></div>
<div class="lc" style="left:367px;top:404px;width:21px;height:21px"></div>
<div class="lc" style="left:389px;top:404px;width:21px;height:21px"></div>
<div class="lc" style="left:411px;top:404px;width:20px;height:21px"></div>
<div class="lc" style="left:432px;top:404px;width:21px;height:21px"></div>
<div class="lc" style="left:454px;top:404px;width:21px;height:21px"></div>
<div class="lc" style="left:476px;top:404px;width:21px;height:21px"></div>
<div class="lc" style="left:498px;top:404px;width:21px;height:21px"></div>
<div class="lc" style="left:520px;top:404px;width:21px;height:21px"></div>
<div class="lc" style="left:542px;top:404px;width:21px;height:21px"></div>
<div class="lc" style="left:564px;top:404px;width:21px;height:21px"></div>
<div class="lc" style="left:586px;top:404px;width:21px;height:21px"></div>
<div class="lc" style="left:608px;top:404px;width:21px;height:21px"></div>
<div class="lc" style="left:630px;top:404px;width:21px;height:21px"></div>
<div class="lc" style="left:652px;top:404px;width:21px;height:21px"></div>
<div class="lc" style="left:674px;top:404px;width:21px;height:21px"></div>
<div class="lc" style="left:696px;top:404px;width:21px;height:21px"></div>
<div class="lc" style="left:718px;top:404px;width:21px;height:21px"></div>
<div class="lc" style="left:740px;top:404px;width:21px;height:21px"></div>
<div class="bar" style="left:102px;top:404px;width:318px;height:21px;background:#ff0000"><span style="top:5px">000022</span></div>
<div class="bar" style="left:425px;top:404px;width:259px;height:21px;background:#00ff00"><span style="top:5px">000040</span></div>
<div class="yc" style="top:426px;height:21px"></div>
<div class="t" style="left:17px;top:431px">PN1000</div>
<div class="lc" style="left:103px;top:426px;width:21px;height:21px"></div>
<div class="lc" style="left:125px;top:426px;width:21px;height:21px"></div>
<div class="lc" style="left:147px;top:426px;width:21px;height:21px"></div>
<div class="lc" style="left:169px;top:426px;width:21px;height:21px"></div>
<div class="lc" style="left:191px;top:426px;width:21px;height:21px"></div>
<div class="lc" style="left:213px;top:426px;width:21px;height:21px"></div>
<div class="lc" style="left:235px;top:426px;width:21px;height:21px"></div>
<div class="lc" style="left:257px;top:426px;width:21px;height:21px"></div>
<div class="lc" style="left:279px;top:426px;width:21px;height:21px"></div>
<div class="lc" style="left:301px;top:426px;width:21px;height:21px"></div>
<div class="lc" style="left:323px;top:426px;width:21px;height:21px"></div>
<div class="lc" style="left:345px;top:426px;width:21px;height:21px"></div>
<div class="lc" style="left:367px;top:426px;width:21px;height:21px"></div>
<div class="lc" style="left:389px;top:426px;width:21px;height:21px"></div>
<div class="lc" style="left:411px;top:426px;width:20px;height:21px"></div>
<div class="lc" style="left:432px;top:426px;width:21px;height:21px"></div>
<div class="lc" style="left:454px;top:426px;width:21px;height:21px"></div>
<div class="lc" style="left:476px;top:426px;width:21px;height:21px"></div>
<div class="lc" style="left:498px;top:426px;width:21px;height:21px"></div>
<div class="lc" style="left:520px;top:426px;width:21px;height:21px"></div>
<div class="lc" style="left:542px;top:426px;width:21px;height:21px"></div>
<div class="lc" style="left:564px;top:426px;width:21px;height:21px"></div>
<div class="lc" style="left:586px;top:426px;width:21px;height:21px"></div>
<div class="lc" style="left:608px;top:426px;width:21px;height:21px"></div>
<div class="lc" style="left:630px;top:426px;width:21px;height:21px"></div>
<div class="lc" style="left:652px;top:426px;width:21px;height:21px"></div>
<div class="lc" style="left:674px;top:426px;width:21px;height:21px"></div>
<div class="lc" style="left:696px;top:426px;width:21px;height:21px"></div>
<div class="lc" style="left:718px;top:426px;width:21px;height:21px"></div>
<div class="lc" style="left:740px;top:426px;width:21px;height:21px"></div>
<div class="bar" style="left:102px;top:426px;width:296px;height:21px;background:#ff0000"><span style="top:5px">000023</span></div>
<div class="bar" style="left:513px;top:426px;width:214px;height:21px;background:#00ff00"><span style="top:5px">000041</span></div>
<div class="yc" style="top:448px;height:21px"></div>
<div class="t" style="left:17px;top:453px">PO1000</div>
<div class="lc" style="left:103px;top:448px;width:21px;height:21px"></div>
<div class="lc" style="left:125px;top:448px;width:21px;height:21px"></div>
<div class="lc" style="left:147px;top:448px;width:21px;height:21px"></div>
<div class="lc" style="left:169px;top:448px;width:21px;height:21px"></div>
<div class="lc" style="left:191px;top:448px;width:21px;height:21px"></div>
<div class="lc" style="left:213px;top:448px;width:21px;height:21px"></div>
<div class="lc" style="left:235px;top:448px;width:21px;height:21px"></div>
<div class="lc" style="left:257px;top:448px;width:21px;height:21px"></div>
<div class="lc" style="left:279px;top:448px;width:21px;height:21px"></div>
<div class="lc" style="left:301px;top:448px;width:21px;height:21px"></div>
<div class="lc" style="left:323px;top:448px;width:21px;height:21px"></div>
<div class="lc" style="left:345px;top:448px;width:21px;height:21px"></div>
<div class="lc" style="left:367px;top:448px;width:21px;height:21px"></div>
<div class="lc" style="left:389px;top:448px;width:21px;height:21px"></div>
<div class="lc" style="left:411px;top:448px;width:20px;height:21px"></div>
<div class="lc" style="left:432px;top:448px;width:21px;height:21px"></div>
<div class="lc" style="left:454px;top:448px;width:21px;height:21px"></div>
<div class="lc" style="left:476px;top:448px;width:21px;height:21px"></div>
<div class="lc" style="left:498px;top:448px;width:21px;height:21px"></div>
<div class="lc" style="left:520px;top:448px;width:21px;height:21px"></div>
<div class="lc" style="left:542px;top:448px;width:21px;height:21px"></div>
<div class="lc" style="left:564px;top:448px;width:21px;height:21px"></div>
<div class="lc" style="left:586px;top:448px;width:21px;height:21px"></div>
<div class="lc" style="left:608px;top:448px;width:21px;height:21px"></div>
<div class="lc" style="left:630px;top:448px;width:21px;height:21px"></div>
<div class="lc" style="left:652px;top:448px;width:21px;height:21px"></div>
<div class="lc" style="left:674px;top:448px;width:21px;height:21px"></div>
<div class="lc" style="left:696px;top:448px;width:21px;height:21px"></div>
<div class="lc" style="left:718px;top:448px;width:21px;height:21px"></div>
<div class="lc" style="left:740px;top:448px;width:21px;height:21px"></div>
<div class="bar" style="left:156px;top:448px;width:270px;height:21px;background:#ff0000"><span style="top:5px">000024</span></div>
<div class="bar" style="left:551px;top:448px;width:116px;height:21px;background:#00ff00"><span style="top:5px">000042</span></div>
<div class="yc" style="top:470px;height:21px"></div>
<div class="t" style="left:17px;top:475px">PP1000</div>
<div class="lc" style="left:103px;top:470px;width:21px;height:21px"></div>
<div class="lc" style="left:125px;top:470px;width:21px;height:21px"></div>
<div class="lc" style="left:147px;top:470px;width:21px;height:21px"></div>
<div class="lc" style="left:169px;top:470px;width:21px;height:21px"></div>
<div class="lc" style="left:191px;top:470px;width:21px;height:21px"></div>
<div class="lc" style="left:213px;top:470px;width:21px;height:21px"></div>
<div class="lc" style="left:235px;top:470px;width:21px;height:21px"></div>
<div class="lc" style="left:257px;top:470px;width:21px;height:21px"></div>
<div class="lc" style="left:279px;top:470px;width:21px;height:21px"></div>
<div class="lc" style="left:301px;top:470px;width:21px;height:21px"></div>
<div class="lc" style="left:323px;top:470px;width:21px;height:21px"></div>
<div class="lc" style="left:345px;top:470px;width:21px;height:21px"></div>
<div class="lc" style="left:367px;top:470px;width:21px;height:21px"></div>
<div class="lc" style="left:389px;top:470px;width:21px;height:21px"></div>
<div class="lc" style="left:411px;top:470px;width:20px;height:21px"></div>
<div class="lc" style="left:432px;top:470px;width:21px;height:21px"></div>
<div class="lc" style="left:454px;top:470px;width:21px;height:21px"></div>
<div class="lc" style="left:476px;top:470px;width:21px;height:21px"></div>
<div class="lc" style="left:498px;top:470px;width:21px;height:21px"></div>
<div class="lc" style="left:520px;top:470px;width:21px;height:21px"></div>
<div class="lc" style="left:542px;top:470px;width:21px;height:21px"></div>
<div class="lc" style="left:564px;top:470px;width:21px;height:21px"></div>
<div class="lc" style="left:586px;top:470px;width:21px;height:21px"></div>
<div class="lc" style="left:608px;top:470px;width:21px;height:21px"></div>
<div class="lc" style="left:630px;top:470px;width:21px;height:21px"></div>
<div class="lc" style="left:652px;top:470px;width:21px;height:21px"></div>
<div class="lc" style="left:674px;top:470px;width:21px;height:21px"></div>
<div class="lc" style="left:696px;top:470px;width:21px;height:21px"></div>
<div class="lc" style="left:718px;top:470px;width:21px;height:21px"></div>
<div class="lc" style="left:740px;top:470px;width:21px;height:21px"></div>
<div class="bar" style="left:102px;top:470px;width:231px;height:21px;background:#82827c"><span style="top:5px">000025</span></div>
<div class="bar" style="left:469px;top:470px;width:277px;height:21px;background:#00ff00"><span style="top:5px">000043</span></div>
</div>
<div class="abs" style="left:744px;top:86px;width:19px;height:403px;background:#fdfcf9"></div>
<div class="abs" style="left:760px;top:86px;width:1px;height:403px;background:#e6e4dc"></div>
<div class="abs" style="left:745px;top:87px;width:15px;height:15px;border-radius:2px;background:linear-gradient(135deg,#dce6fe,#b8cdfb);box-shadow:inset 0 0 0 1px #c0d0f8,1px 1px 0 #e8eefc"></div>
<svg class="abs" style="left:747px;top:90px" width="11" height="8"><path d="M1.5 6.5 L5.5 2.5 L9.5 6.5" fill="none" stroke="#4d6185" stroke-width="2.2"/></svg>
<div class="abs" style="left:745px;top:125px;width:15px;height:214px;border-radius:2px;background:linear-gradient(90deg,#c6d6fc,#c0d3fd 50%,#b4c8f8);box-shadow:inset 0 0 0 1px #b0c4f4,0 1px 0 #8ca8e8"></div>
<div class="abs" style="left:749px;top:228px;width:7px;height:1px;background:#eef3ff"></div><div class="abs" style="left:750px;top:229px;width:7px;height:1px;background:#8caaf0"></div>
<div class="abs" style="left:749px;top:231px;width:7px;height:1px;background:#eef3ff"></div><div class="abs" style="left:750px;top:232px;width:7px;height:1px;background:#8caaf0"></div>
<div class="abs" style="left:749px;top:234px;width:7px;height:1px;background:#eef3ff"></div><div class="abs" style="left:750px;top:235px;width:7px;height:1px;background:#8caaf0"></div>
<div class="abs" style="left:749px;top:237px;width:7px;height:1px;background:#eef3ff"></div><div class="abs" style="left:750px;top:238px;width:7px;height:1px;background:#8caaf0"></div>
<div class="abs" style="left:745px;top:473px;width:15px;height:15px;border-radius:2px;background:linear-gradient(135deg,#dce6fe,#b8cdfb);box-shadow:inset 0 0 0 1px #c0d0f8,1px 1px 0 #e8eefc"></div>
<svg class="abs" style="left:747px;top:477px" width="11" height="8"><path d="M1.5 1.5 L5.5 5.5 L9.5 1.5" fill="none" stroke="#4d6185" stroke-width="2.2"/></svg>
<div class="abs" style="left:5px;top:489px;width:739px;height:17px;background:#fdfcf9"></div>
<div class="abs" style="left:5px;top:505px;width:739px;height:1px;background:#e6e4dc"></div>
<div class="abs" style="left:6px;top:491px;width:15px;height:15px;border-radius:2px;background:linear-gradient(135deg,#dce6fe,#b8cdfb);box-shadow:inset 0 0 0 1px #c0d0f8,1px 1px 0 #e8eefc"></div>
<svg class="abs" style="left:9px;top:493px" width="8" height="11"><path d="M6.5 1.5 L2.5 5.5 L6.5 9.5" fill="none" stroke="#4d6185" stroke-width="2.2"/></svg>
<div class="abs" style="left:50px;top:491px;width:501px;height:14px;border-radius:2px;background:linear-gradient(#c6d6fc,#c0d3fd 50%,#b4c8f8);box-shadow:inset 0 0 0 1px #b0c4f4,1px 0 0 #8ca8e8"></div>
<div class="abs" style="left:296px;top:495px;width:1px;height:7px;background:#eef3ff"></div><div class="abs" style="left:297px;top:496px;width:1px;height:7px;background:#8caaf0"></div>
<div class="abs" style="left:298px;top:495px;width:1px;height:7px;background:#eef3ff"></div><div class="abs" style="left:299px;top:496px;width:1px;height:7px;background:#8caaf0"></div>
<div class="abs" style="left:300px;top:495px;width:1px;height:7px;background:#eef3ff"></div><div class="abs" style="left:301px;top:496px;width:1px;height:7px;background:#8caaf0"></div>
<div class="abs" style="left:302px;top:495px;width:1px;height:7px;background:#eef3ff"></div><div class="abs" style="left:303px;top:496px;width:1px;height:7px;background:#8caaf0"></div>
<div class="abs" style="left:728px;top:491px;width:15px;height:15px;border-radius:2px;background:linear-gradient(135deg,#dce6fe,#b8cdfb);box-shadow:inset 0 0 0 1px #c0d0f8,1px 1px 0 #e8eefc"></div>
<svg class="abs" style="left:731px;top:493px" width="8" height="11"><path d="M1.5 1.5 L5.5 5.5 L1.5 9.5" fill="none" stroke="#4d6185" stroke-width="2.2"/></svg>
<div class="abs" style="left:744px;top:489px;width:19px;height:17px;background:#edeedc"></div>
<div class="abs" style="left:4px;top:506px;width:759px;height:20px;background:#edeedc"></div>
<div class="abs" style="left:4px;top:506px;width:759px;height:1px;background:#f2f0e6"></div>
<div class="abs" style="left:4px;top:507px;width:759px;height:1px;background:#fff"></div>
<div class="abs" style="left:4px;top:512px;font-size:10.5px;line-height:13px;white-space:nowrap">Display full pages</div>
<div style="position:absolute;top:510px;height:16px;border-left:1px solid #c5c2b2;border-top:1px solid #c5c2b2;border-right:1px solid #fff;left:655px;width:26px"></div>
<div style="position:absolute;top:510px;height:16px;border-left:1px solid #c5c2b2;border-top:1px solid #c5c2b2;border-right:1px solid #fff;left:682px;width:28px"></div>
<div style="position:absolute;top:510px;height:16px;border-left:1px solid #c5c2b2;border-top:1px solid #c5c2b2;border-right:1px solid #fff;left:712px;width:31px"></div>
<div class="abs" style="left:684px;top:512px;font-size:10.5px;line-height:13px">NUM</div>
<svg class="abs" style="left:749px;top:512px" width="13" height="14"><path d="M12 2 L2 12 M12 6 L6 12 M12 10 L10 12" stroke="#c5c2b2" stroke-width="1.2"/><path d="M12 3 L3 12 M12 7 L7 12 M12 11 L11 12" stroke="#fff" stroke-width="1"/></svg>
<div class="abs" style="left:43px;top:54px;width:1px;height:28px;background:#c5c2b2"></div><div class="abs" style="left:44px;top:54px;width:1px;height:28px;background:#fff"></div>
<div class="abs" style="left:108px;top:54px;width:1px;height:28px;background:#c5c2b2"></div><div class="abs" style="left:109px;top:54px;width:1px;height:28px;background:#fff"></div>
<div class="abs" style="left:142px;top:54px;width:1px;height:28px;background:#c5c2b2"></div><div class="abs" style="left:143px;top:54px;width:1px;height:28px;background:#fff"></div>
<div class="abs" style="left:241px;top:54px;width:1px;height:28px;background:#c5c2b2"></div><div class="abs" style="left:242px;top:54px;width:1px;height:28px;background:#fff"></div>
<div class="abs" style="left:309px;top:54px;width:1px;height:28px;background:#c5c2b2"></div><div class="abs" style="left:310px;top:54px;width:1px;height:28px;background:#fff"></div>
<div class="abs" style="left:377px;top:54px;width:1px;height:28px;background:#c5c2b2"></div><div class="abs" style="left:378px;top:54px;width:1px;height:28px;background:#fff"></div>
<div class="abs" style="left:445px;top:54px;width:1px;height:28px;background:#c5c2b2"></div><div class="abs" style="left:446px;top:54px;width:1px;height:28px;background:#fff"></div>
<div class="abs" style="left:511px;top:52px;width:1px;height:32px;background:#c5c2b2"></div>
<div class="abs" style="left:78px;top:52px;width:31px;height:32px;border-left:1px solid #fff;border-top:1px solid #fff;border-right:1px solid #aca899;border-bottom:1px solid #aca899;background:#f0eee4"></div>
<svg class="abs" style="left:0;top:0" width="520" height="90" shape-rendering="crispEdges"><rect x="15" y="57" width="20" height="21" fill="#000"/><rect x="16" y="58" width="2" height="19" fill="#a8a898"/><rect x="32" y="58" width="2" height="19" fill="#a8a898"/><rect x="18" y="58" width="14" height="9" fill="#000"/><rect x="19" y="58" width="12" height="8" fill="#edeedc"/><rect x="18" y="67" width="14" height="3" fill="#a8a898"/><rect x="19" y="70" width="13" height="7" fill="#000"/><rect x="29" y="72" width="2" height="5" fill="#edeedc"/><path d="M56.5 62 V58.5 H66.5 V62" fill="#fff" stroke="#000"/><path d="M55.5 65 V61.5 H65.5 V65" fill="#fff" stroke="#000"/><path d="M54.5 68 V64.5 H64.5 V68" fill="#fff" stroke="#000"/><path d="M52.5 68.5 H66.5 L71.5 63.5 V72.5 L67.5 76.5 H52.5 L51.5 75.5 V69.5 Z" fill="#f2f0e6" stroke="#000"/><path d="M66.5 68.5 V76.5 M64.5 68 L69.5 63 M67 66 L70 63" stroke="#000" fill="none"/><rect x="53" y="70" width="13" height="1" fill="#fff"/><rect x="62" y="73" width="4" height="2" fill="#ffff00"/><path d="M53.5 76.5 V78.5 H66.5 L68.5 76.5" fill="#f2f0e6" stroke="#000"/><path d="M85.5 58.5 H93.5 L99.5 64.5 V75.5 H85.5 Z" fill="#fff" stroke="#000"/><path d="M93.5 58.5 V64.5 H99.5" fill="none" stroke="#000"/><g shape-rendering="geometricPrecision"><circle cx="97.5" cy="71" r="3.2" fill="#fff" stroke="#000" stroke-width="1"/><path d="M94.8 70.2 A2.7 2.7 0 0 1 100.2 70.2 Z" fill="#008000"/></g><rect x="101" y="69" width="1" height="5" fill="#000"/><rect x="112.5" y="55.5" width="23" height="22" fill="#fff" stroke="#aca899"/><path d="M121 71 L125.5 57 H129 L134 71 H131 L130 68 H124.8 L124 71 Z M125.6 65.5 H129.2 L127.4 60 Z" fill="#000" fill-rule="evenodd"/><path d="M116.5 73.5 L118.5 71.5 V74" stroke="#000" fill="none"/><rect x="149" y="57" width="24" height="21" fill="#000"/><rect x="150" y="58" width="22" height="19" fill="#fff"/><rect x="160" y="58" width="2" height="19" fill="#000"/><rect x="158" y="57" width="2" height="3" fill="#000"/><rect x="162" y="57" width="2" height="3" fill="#000"/><rect x="158" y="66" width="2" height="3" fill="#000"/><rect x="162" y="66" width="2" height="3" fill="#000"/><rect x="158" y="75" width="2" height="3" fill="#000"/><rect x="162" y="75" width="2" height="3" fill="#000"/><rect x="160" y="58" width="2" height="1" fill="#fff"/><rect x="160" y="67" width="2" height="1" fill="#fff"/><rect x="160" y="76" width="2" height="1" fill="#fff"/><path d="M153 60 H155 V68 H156 V69 H151 V68 H153 V62 H152 V61 Z" fill="#ff0000"/><rect x="152" y="60" width="3" height="2" fill="#ff0000"/><path d="M165.5 62.5 Q165.5 60.2 167.7 60.2 Q170.2 60.2 170.2 62.5 Q170.2 64.2 167.5 66.5 L166.5 67.5 H170.5" stroke="#ff0000" stroke-width="2" fill="none" shape-rendering="geometricPrecision"/><rect x="152" y="70" width="6" height="1" fill="#000"/><rect x="164" y="70" width="6" height="1" fill="#000"/><rect x="152" y="72" width="6" height="1" fill="#000"/><rect x="164" y="72" width="6" height="1" fill="#000"/><rect x="152" y="74" width="6" height="1" fill="#000"/><rect x="164" y="74" width="6" height="1" fill="#000"/><rect x="184" y="60" width="12" height="3" fill="#000"/><path d="M195 56.5 L201 61.5 L195 66.5 Z" fill="#000"/><rect x="180" y="67" width="3" height="1" fill="#fff"/><rect x="185" y="67" width="3" height="1" fill="#fff"/><rect x="190" y="67" width="3" height="1" fill="#fff"/><rect x="195" y="67" width="3" height="1" fill="#fff"/><rect x="200" y="67" width="3" height="1" fill="#fff"/><rect x="189" y="72" width="11" height="3" fill="#000"/><path d="M189.5 68.5 L183 73.5 L189.5 78.5 Z" fill="#000"/><rect x="220" y="57" width="6" height="3" fill="#000"/><rect x="221" y="58" width="4" height="1" fill="#fff"/><rect x="215" y="59" width="16" height="4" fill="#000"/><rect x="216" y="60" width="14" height="2" fill="#009000"/><rect x="215" y="62" width="16" height="2" fill="#000"/><rect x="216" y="63" width="14" height="15" fill="#000"/><rect x="217" y="64" width="12" height="13" fill="#009000"/><rect x="218" y="64" width="1" height="13" fill="#a8b8a0"/><rect x="220" y="64" width="1" height="13" fill="#a8b8a0"/><rect x="222" y="64" width="1" height="13" fill="#a8b8a0"/><rect x="224" y="64" width="1" height="13" fill="#a8b8a0"/><rect x="226" y="64" width="1" height="13" fill="#a8b8a0"/><path d="M252 59 H268 L270 61 V74 H250 V61 Z" fill="#0000ff"/><rect x="252" y="60" width="16" height="5" fill="#fff"/><rect x="251" y="61" width="18" height="4" fill="#fff"/><rect x="250" y="65" width="20" height="3" fill="#000080"/><rect x="251" y="69" width="4" height="3" fill="#ff0000"/><rect x="251" y="69" width="1" height="3" fill="#ffff00"/><rect x="265" y="69" width="4" height="3" fill="#ff0000"/><rect x="268" y="69" width="1" height="3" fill="#ffff00"/><rect x="257" y="70" width="6" height="2" fill="#b0b0a0"/><rect x="251" y="73" width="3" height="4" fill="#000"/><rect x="266" y="73" width="3" height="4" fill="#000"/><rect x="284" y="59" width="14" height="1" fill="#0000ff"/><rect x="283" y="60" width="1" height="1" fill="#0000ff"/><rect x="282" y="61" width="1" height="1" fill="#0000ff"/><rect x="298" y="60" width="1" height="1" fill="#0000ff"/><rect x="299" y="61" width="1" height="1" fill="#0000ff"/><rect x="281" y="62" width="1" height="12" fill="#0000ff"/><rect x="300" y="62" width="1" height="12" fill="#0000ff"/><rect x="284" y="60" width="14" height="1" fill="#fff"/><rect x="283" y="61" width="16" height="1" fill="#fff"/><rect x="282" y="62" width="18" height="5" fill="#fff"/><rect x="285" y="65" width="4" height="1" fill="#000"/><rect x="284" y="66" width="1" height="1" fill="#000"/><rect x="289" y="66" width="1" height="1" fill="#000"/><rect x="283" y="67" width="1" height="0" fill="#000"/><rect x="282" y="67" width="18" height="6" fill="#0000ff"/><rect x="282" y="69" width="4" height="3" fill="#fff"/><rect x="296" y="69" width="4" height="3" fill="#fff"/><rect x="283" y="72" width="2" height="1" fill="#ffff00"/><rect x="297" y="72" width="2" height="1" fill="#ffff00"/><rect x="288" y="69" width="6" height="1" fill="#000"/><rect x="287" y="71" width="8" height="1" fill="#000"/><rect x="281" y="73" width="20" height="1" fill="#000080"/><rect x="282" y="74" width="3" height="3" fill="#000"/><rect x="297" y="74" width="3" height="3" fill="#000"/><rect x="316" y="57" width="24" height="21" fill="#aca899"/><rect x="339" y="57" width="1" height="21" fill="#fff"/><rect x="316" y="77" width="24" height="1" fill="#fff"/><rect x="317" y="58" width="6" height="2" fill="#f2f0e4"/><rect x="317" y="62" width="11" height="2" fill="#f2f0e4"/><rect x="317" y="66" width="3" height="2" fill="#f2f0e4"/><rect x="317" y="70" width="8" height="2" fill="#f2f0e4"/><rect x="317" y="74" width="11" height="2" fill="#f2f0e4"/><rect x="352" y="60" width="5" height="6" fill="#000"/><rect x="361" y="60" width="5" height="6" fill="#000"/><rect x="350" y="65" width="18" height="7" fill="#000"/><rect x="350" y="72" width="7" height="4" fill="#000"/><rect x="361" y="72" width="7" height="4" fill="#000"/><rect x="353" y="61" width="1" height="4" fill="#fff"/><rect x="362" y="61" width="1" height="4" fill="#fff"/><rect x="351" y="66" width="1" height="3" fill="#fff"/><rect x="362" y="66" width="1" height="3" fill="#fff"/><rect x="351" y="72" width="1" height="2" fill="#fff"/><rect x="362" y="72" width="1" height="2" fill="#fff"/><g shape-rendering="geometricPrecision"><path d="M394 61.5 L397.5 58 H401 V59.8 L398.5 62.3 V64.6 L399.4 65.5 L403 62 H405.5 V65.5 L402.4 68.6 H399.2 L389 78.6 H387.2 L384.6 76 V75 L394 65.6 Z" fill="#000"/><path d="M387.5 76.2 L396.2 67.5 V63.3 L399 60.3 M397.2 67.3 H401 L404.2 64" stroke="#a8a898" stroke-width="0.9" fill="none"/></g><path d="M421.5 72 V66.5 L425.5 58.5 V72 Z" fill="#b8b8a8" stroke="#000"/><rect x="422" y="67" width="1" height="5" fill="#e0e0d0"/><rect x="416.5" y="71.5" width="10" height="6" fill="#a8a898" stroke="#000"/><rect x="417" y="72" width="5" height="5" fill="#d0d0c0"/><rect x="428.5" y="65.5" width="10" height="5" fill="#a8a898" stroke="#000"/><rect x="426" y="66" width="2" height="4" fill="#fff"/><rect x="429" y="66" width="9" height="1" fill="#d8d8c8"/><g shape-rendering="geometricPrecision"><path d="M458.8 63.2 Q458.8 59.6 463.5 59.6 Q468.3 59.6 468.3 63 Q468.3 65.4 465.6 66.8 Q463.6 67.9 463.6 70.2" stroke="#000" stroke-width="5" fill="none"/><circle cx="463.6" cy="75.3" r="2.6" fill="#000"/><path d="M458.8 63.2 Q458.8 59.6 463.5 59.6 Q468.3 59.6 468.3 63 Q468.3 65.4 465.6 66.8 Q463.6 67.9 463.6 70.2" stroke="#ffff00" stroke-width="2.6" fill="none"/><circle cx="463.6" cy="75.3" r="1.3" fill="#ffff00"/><path d="M486 60 V72.5 L488.7 69.8 L491.2 74.5 L493.2 73.5 L490.8 68.8 L494.5 68.8 Z" fill="#000"/><path d="M495.3 62.5 Q495.3 59 499.2 59 Q503.2 59 503.2 62.3 Q503.2 64.6 500.8 65.9 Q498.9 67 498.9 70" stroke="#000080" stroke-width="2.6" fill="none"/><circle cx="498.9" cy="74.5" r="1.8" fill="#000080"/></g></svg>
<div class="abs" style="left:83px;top:74px;width:69px;height:17px;background:#ffffe1;border:1px solid #000"></div>
<div class="abs" style="left:86px;top:77px;font-size:10.5px;line-height:13px;white-space:nowrap">Print Preview</div>
</div>
</body></html>
